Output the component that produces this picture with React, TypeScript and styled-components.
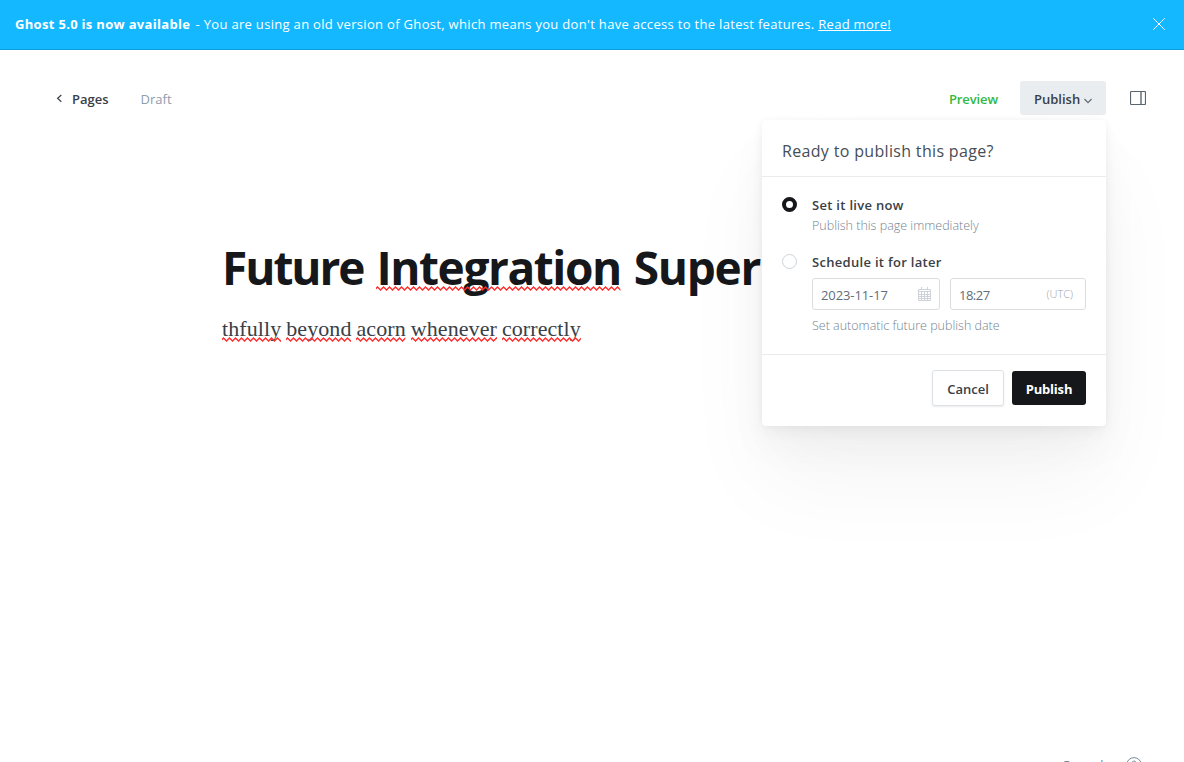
import React, { useId } from 'react';
import styled, { createGlobalStyle } from 'styled-components';

const GlobalStyle = createGlobalStyle`
  *, *::before, *::after { box-sizing: border-box; }
  body {
    margin: 0;
    background: #fff;
    color: #15171a;
    font-family: "Open Sans", "Noto Sans", sans-serif;
    font-size: 13px;
  }
  button { font-family: inherit; cursor: pointer; }
`;

const Page = styled.div`
  display: flex;
  flex-direction: column;
  height: 762px;
  overflow: hidden;
`;

const Banner = styled.div`
  display: flex;
  flex: none;
  align-items: center;
  justify-content: space-between;
  height: 50px;
  padding: 0 18px 2px 15px;
  border-bottom: 1px solid #0a9ee0;
  background: #14b8ff;
  color: #fff;
  line-height: 20px;
  letter-spacing: 0.315px;
  white-space: nowrap;

  b { margin-right: 1.5px; }
`;

const BannerLink = styled.a`
  color: #fff;
  text-decoration: underline;
  text-underline-offset: 1px;
`;

const CloseButton = styled.button`
  display: flex;
  padding: 0;
  border: 0;
  background: none;
  color: #fff;
`;

const Header = styled.header`
  display: flex;
  flex: none;
  align-items: center;
  justify-content: space-between;
  height: 34px;
  margin-top: 31px;
  padding: 0 38px 0 56px;
`;

const HeaderGroup = styled.div`
  display: flex;
  align-items: center;
`;

const BackLink = styled.a`
  display: flex;
  align-items: center;
  gap: 8px;
  padding-top: 2px;
  color: #394047;
  font-weight: 600;
`;

const Status = styled.span`
  margin-left: 32px;
  padding-top: 2px;
  color: #8e9cac;
`;

const PreviewButton = styled.button`
  padding: 2px 0 0;
  border: 0;
  background: none;
  color: #30b944;
  font-size: 13px;
  font-weight: 600;
  letter-spacing: -0.1px;
`;

const PublishMenu = styled.div`
  position: relative;
  margin: 0 24px 0 22px;
`;

const PublishTrigger = styled.button`
  display: flex;
  align-items: center;
  gap: 4px;
  width: 86px;
  height: 34px;
  padding: 2px 0 0 14px;
  border: 0;
  border-radius: 3px;
  background: #e9edf0;
  color: #394047;
  font-size: 13px;
  font-weight: 600;

  svg { margin-top: 3px; }
`;

const SettingsButton = styled.button`
  display: flex;
  padding: 0;
  border: 0;
  background: none;
`;

const Dropdown = styled.section`
  position: absolute;
  z-index: 2;
  top: 39px;
  right: 0;
  display: flex;
  flex-direction: column;
  width: 344px;
  height: 306px;
  border-radius: 4px;
  background: #fff;
  box-shadow:
    0 0 7px rgba(0, 0, 0, 0.04),
    0 6px 14px rgba(0, 0, 0, 0.04),
    0 22px 40px rgba(0, 0, 0, 0.035),
    0 56px 90px rgba(0, 0, 0, 0.045);
`;

const DropdownTitle = styled.h2`
  height: 57px;
  margin: 0;
  padding: 20px 20px 0;
  border-bottom: 1px solid #e9ebed;
  color: #464d55;
  font-size: 16px;
  font-weight: 400;
  line-height: 22px;
  letter-spacing: 0.33px;
`;

const Options = styled.div`
  display: flex;
  flex: 1;
  flex-direction: column;
  gap: 17px;
  padding: 18px 20px 0;
`;

const Option = styled.div`
  display: flex;
  gap: 15px;
`;

const Radio = styled.span<{ $checked?: boolean }>`
  flex: none;
  width: 15px;
  height: 15px;
  margin-top: 2px;
  border: ${({ $checked }) => ($checked ? '4px solid #15171a' : '1px solid #ced4d9')};
  border-radius: 50%;
  background: #fff;
`;

const OptionBody = styled.div`
  display: flex;
  flex: 1;
  flex-direction: column;
`;

const OptionLabel = styled.label`
  color: #394047;
  font-weight: 600;
  line-height: 20px;
  letter-spacing: 0.3px;
`;

const Hint = styled.span`
  padding-top: 1px;
  color: #74838f;
  font-size: 12.5px;
  font-weight: 300;
  line-height: 19px;
`;

const Fields = styled.div`
  display: grid;
  grid-template-columns: 128px 136px;
  gap: 10px;
  margin: 6px 0 5px;
`;

const Field = styled.div`
  display: flex;
  align-items: center;
  justify-content: space-between;
  height: 32px;
  padding: 0 8px;
  border: 1px solid #dadddf;
  border-radius: 3px;
  background: #fff;
`;

const FieldValue = styled.span<{ $tight?: boolean }>`
  padding-top: 2px;
  color: #626d79;
  letter-spacing: ${({ $tight }) => ($tight ? '-0.5px' : '-0.1px')};
`;

const Zone = styled.span`
  padding: 0 4px 1px 0;
  color: #9aa5b1;
  font-size: 11px;
  font-weight: 300;
`;

const Actions = styled.div`
  display: flex;
  justify-content: flex-end;
  align-items: flex-start;
  gap: 8px;
  height: 72px;
  padding: 15px 20px 0;
  border-top: 1px solid #e9ebed;
`;

const CancelButton = styled.button`
  width: 72px;
  height: 36px;
  padding: 2px 0 0;
  border: 1px solid #dde1e5;
  border-radius: 3px;
  background: #fff;
  box-shadow: 0 1px 2px rgba(0, 0, 0, 0.08);
  color: #394047;
  font-size: 13px;
  font-weight: 600;
`;

const ConfirmButton = styled.button`
  width: 74px;
  height: 34px;
  margin-top: 1px;
  padding: 2px 0 0;
  border: 0;
  border-radius: 3px;
  background: #15171a;
  color: #fff;
  font-size: 13px;
  font-weight: 700;
  letter-spacing: -0.2px;
`;

const Editor = styled.main`
  flex: none;
  width: 740px;
  height: 641px;
  margin-left: 222px;
  padding-top: 122px;
  white-space: nowrap;
`;

const Title = styled.h1`
  display: flex;
  gap: 13px;
  margin: 0;
  font-size: 46px;
  font-weight: 700;
  line-height: 60px;
`;

const TitleWord = styled.span<{ $tracking: number }>`
  position: relative;
  letter-spacing: ${({ $tracking }) => $tracking}px;
`;

const Body = styled.p`
  display: flex;
  gap: 5px;
  margin: 15px 0 0;
  color: #394047;
  font-family: "Liberation Serif", serif;
  font-size: 22px;
  line-height: 34px;
  letter-spacing: 0.08px;
`;

const BodyWord = styled.span`
  position: relative;
`;

const SquiggleLine = styled.svg<{ $top: number }>`
  position: absolute;
  top: ${({ $top }) => $top}px;
  left: 0;
  width: 100%;
  height: 5px;
`;

const Footer = styled.footer`
  display: flex;
  flex: none;
  justify-content: flex-end;
  gap: 17px;
  height: 20px;
  padding-right: 42px;
  color: #7c8b9a;
  line-height: 18px;
  letter-spacing: -0.3px;

  svg { margin-top: 1px; }
`;

/* Spell-check underline drawn beneath a flagged word. */
function Squiggle({ top }: { top: number }) {
  const id = useId();
  return (
    <SquiggleLine $top={top} aria-hidden="true">
      <defs>
        <pattern id={id} width="6" height="5" patternUnits="userSpaceOnUse">
          <path d="M-1.5 4 L1.5 1 L4.5 4 L7.5 1" fill="none" stroke="#ff2a2a" strokeWidth="1.3" />
        </pattern>
      </defs>
      <rect width="100%" height="5" fill={`url(#${id})`} />
    </SquiggleLine>
  );
}

const CalendarIcon = () => (
  <svg width="13" height="14" viewBox="0 0 13 14" fill="none" stroke="#cdd3d9" strokeWidth="1">
    <path d="M.5 2.5h12v11H.5zM.5 4.5h12M1 7.5h11M1 9.5h11M1 11.5h11M3.5 5v8M6.5 5v8M9.5 5v8M3.5 0v3M9.5 0v3" />
  </svg>
);

const words = ['thfully', 'beyond', 'acorn', 'whenever', 'correctly'];

export default function App() {
  return (
    <>
      <GlobalStyle />
      <Page>
        <Banner>
          <span>
            <b>Ghost 5.0 is now available</b> - You are using an old version of Ghost, which means you don't have
            access to the latest features. <BannerLink>Read more!</BannerLink>
          </span>
          <CloseButton aria-label="Close">
            <svg width="14" height="14" viewBox="0 0 14 14" fill="none" stroke="currentColor" strokeLinecap="round">
              <path d="M1.5 1.5l11 11M12.5 1.5l-11 11" />
            </svg>
          </CloseButton>
        </Banner>

        <Header>
          <HeaderGroup>
            <BackLink>
              <svg width="8" height="10" viewBox="0 0 8 10" fill="none" stroke="#394047" strokeWidth="1.2">
                <path d="M5.3 1L1.6 4.3l3.7 3.4" />
              </svg>
              Pages
            </BackLink>
            <Status>Draft</Status>
          </HeaderGroup>
          <HeaderGroup>
            <PreviewButton>Preview</PreviewButton>
            <PublishMenu>
              <PublishTrigger>
                Publish
                <svg width="8" height="6" viewBox="0 0 8 6" fill="none" stroke="#626d79" strokeWidth="1.3">
                  <path d="M.4 1L4 4.6 7.6 1" />
                </svg>
              </PublishTrigger>
              <Dropdown>
                <DropdownTitle>Ready to publish this page?</DropdownTitle>
                <Options>
                  <Option>
                    <Radio $checked />
                    <OptionBody>
                      <OptionLabel>Set it live now</OptionLabel>
                      <Hint>Publish this page immediately</Hint>
                    </OptionBody>
                  </Option>
                  <Option>
                    <Radio />
                    <OptionBody>
                      <OptionLabel>Schedule it for later</OptionLabel>
                      <Fields>
                        <Field>
                          <FieldValue>2023-11-17</FieldValue>
                          <CalendarIcon />
                        </Field>
                        <Field>
                          <FieldValue $tight>18:27</FieldValue>
                          <Zone>(UTC)</Zone>
                        </Field>
                      </Fields>
                      <Hint>Set automatic future publish date</Hint>
                    </OptionBody>
                  </Option>
                </Options>
                <Actions>
                  <CancelButton>Cancel</CancelButton>
                  <ConfirmButton>Publish</ConfirmButton>
                </Actions>
              </Dropdown>
            </PublishMenu>
            <SettingsButton aria-label="Settings">
              <svg width="16" height="14" viewBox="0 0 16 14" fill="none" stroke="#5c6670">
                <rect x=".5" y=".5" width="15" height="13" rx="1" strokeWidth="1.2" />
                <path d="M11 .5v13" strokeWidth="1.4" />
              </svg>
            </SettingsButton>
          </HeaderGroup>
        </Header>

        <Editor>
          <Title>
            <TitleWord $tracking={-2.05}>Future</TitleWord>
            <TitleWord $tracking={-1.42}>
              Integration
              <Squiggle top={49} />
            </TitleWord>
            <TitleWord $tracking={-1.3}>Super</TitleWord>
          </Title>
          <Body>
            {words.map((word) => (
              <BodyWord key={word}>
                {word}
                <Squiggle top={25} />
              </BodyWord>
            ))}
          </Body>
        </Editor>

        <Footer>
          <span>5 words</span>
          <svg width="16" height="16" viewBox="0 0 16 16" fill="none" stroke="#7c8b9a">
            <circle cx="8" cy="8" r="7.4" />
            <path d="M5.8 6.2a2.2 2.2 0 1 1 3.2 2c-.7.4-1 .7-1 1.5M8 11v1" />
          </svg>
        </Footer>
      </Page>
    </>
  );
}
